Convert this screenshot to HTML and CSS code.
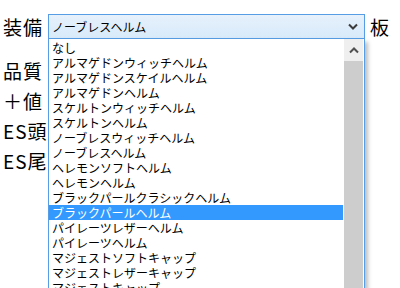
FILE: index.html
```html
<!DOCTYPE html>
<html lang="ja">
<head>
    <meta charset="UTF-8">
    <title>装備選択</title>
    <link rel="stylesheet" href="styles.css">
</head>
<body>
    <div class="form">
        <div class="row first">
            <span class="label">装備</span>
            <div class="combo">
                <div class="select">
                    <span class="value">ノーブレスヘルム</span>
                    <svg class="arrow" width="10" height="7" viewBox="0 0 10 7">
                        <polyline points="1,1.5 5,5.5 9,1.5" fill="none" stroke="#3c3c3c" stroke-width="2"/>
                    </svg>
                </div>
                <div class="dropdown">
                    <ul class="options">
                        <li>なし</li>
                        <li>アルマゲドンウィッチヘルム</li>
                        <li>アルマゲドンスケイルヘルム</li>
                        <li>アルマゲドンヘルム</li>
                        <li>スケルトンウィッチヘルム</li>
                        <li>スケルトンヘルム</li>
                        <li>ノーブレスウィッチヘルム</li>
                        <li>ノーブレスヘルム</li>
                        <li>ヘレモンソフトヘルム</li>
                        <li>ヘレモンヘルム</li>
                        <li>ブラックパールクラシックヘルム</li>
                        <li class="selected">ブラックパールヘルム</li>
                        <li>パイレーツレザーヘルム</li>
                        <li>パイレーツヘルム</li>
                        <li>マジェストソフトキャップ</li>
                        <li>マジェストレザーキャップ</li>
                        <li>マジェストキャップ</li>
                    </ul>
                    <div class="scrollbar">
                        <div class="scroll-up">
                            <svg width="10" height="7" viewBox="0 0 10 7">
                                <polyline points="1,5.5 5,1.5 9,5.5" fill="none" stroke="#505050" stroke-width="2"/>
                            </svg>
                        </div>
                        <div class="thumb"></div>
                    </div>
                </div>
            </div>
            <span class="label side">板</span>
        </div>
        <div class="row"><span class="label">品質</span></div>
        <div class="row"><span class="label">＋値</span></div>
        <div class="row"><span class="label">ES頭</span></div>
        <div class="row"><span class="label">ES尾</span></div>
    </div>
</body>
</html>
```

FILE: styles.css
```css
html, body {
    height: 100%;
}
body {
    margin: 0;
    background-color: white;
    font-family: "Noto Sans CJK JP", sans-serif;
    color: #000;
}
.form {
    padding-top: 14px;
}
.row {
    display: flex;
    align-items: center;
    height: 30px;
}
.row.first {
    height: 25px;
    margin-bottom: 16px;
}
.label {
    width: 46px;
    padding-left: 3px;
    box-sizing: border-box;
    font-size: 19px;
    line-height: 25px;
    letter-spacing: 1px;
    white-space: nowrap;
}
.label.side {
    width: auto;
    padding-left: 5px;
}
.combo {
    position: relative;
    margin-left: 2px;
}
.select {
    width: 317px;
    height: 25px;
    box-sizing: border-box;
    border: 1px solid #569de5;
    background: linear-gradient(#e6f1fc, #d8eafa);
    display: flex;
    align-items: center;
    justify-content: space-between;
    padding: 0 6px 0 3px;
    font-size: 12px;
}
.dropdown {
    position: absolute;
    top: 25px;
    left: 0;
    width: 317px;
    height: 249px;
    box-sizing: border-box;
    border: 1px solid #569de5;
    border-top: none;
    border-bottom: none;
    background-color: white;
    box-shadow: 3px 3px 4px rgba(0,0,0,0.25);
    display: flex;
    overflow: hidden;
}
.options {
    list-style: none;
    margin: 0;
    padding: 1px 0 0;
    flex: 1;
    font-size: 12px;
    line-height: 15px;
}
.options li {
    padding-left: 3px;
    height: 15px;
    white-space: nowrap;
}
.options li.selected {
    background-color: #3399ff;
    color: white;
}
.scrollbar {
    width: 19px;
    margin-left: 1px;
    margin-right: 1px;
    display: flex;
    flex-direction: column;
}
.scroll-up {
    height: 22px;
    flex-shrink: 0;
    background-color: #efefef;
    display: flex;
    align-items: center;
    justify-content: center;
}
.thumb {
    flex: 1;
    background-color: #cdcdcd;
}
```
